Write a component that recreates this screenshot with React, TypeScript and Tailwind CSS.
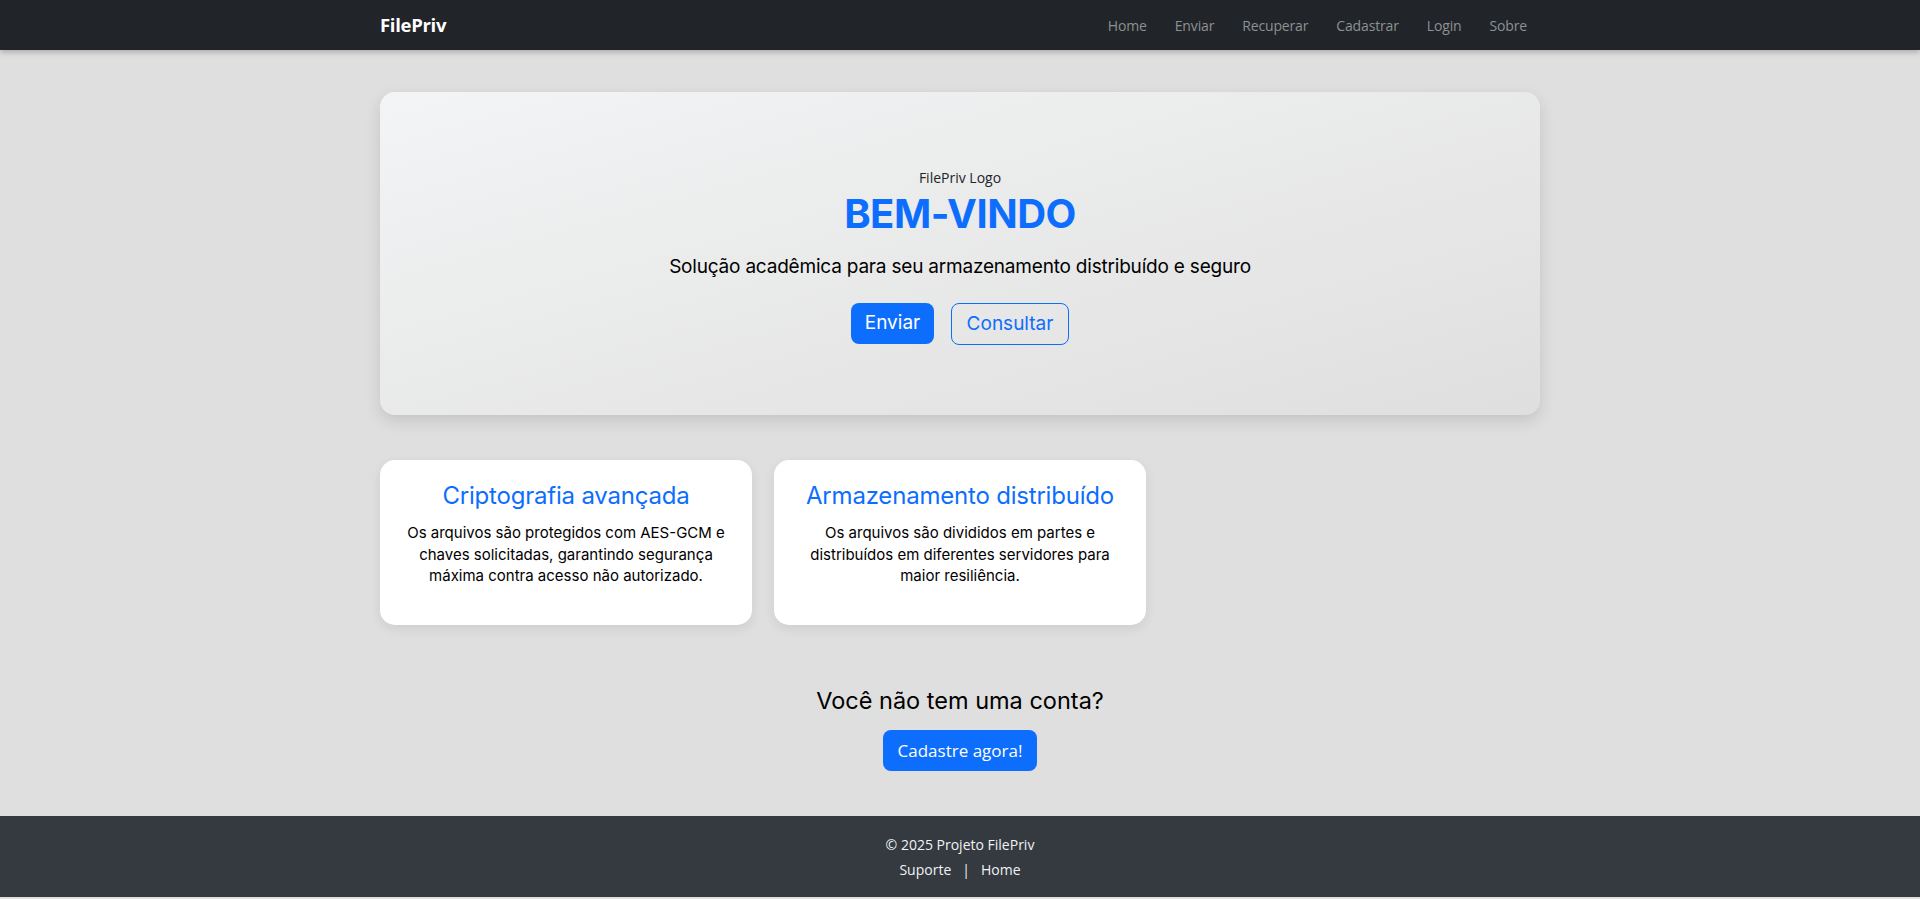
import React from "react";

const sys = { fontFamily: '"Open Sans", "Noto Sans", sans-serif' };
const pop = { fontFamily: 'Inter, "Noto Sans", sans-serif' };

export default function App() {
  const links = ["Home", "Enviar", "Recuperar", "Cadastrar", "Login", "Sobre"];
  return (
    <div className="min-h-screen flex flex-col bg-[#dfdfdf] text-[#212529]">
      <nav className="h-[50px] bg-[#212529] shadow-[0_2px_6px_rgba(0,0,0,0.25)] relative z-10">
        <div className="w-[1160px] mx-auto h-full flex items-center justify-between" style={sys}>
          <span className="text-[18.5px] font-bold text-white tracking-[-0.3px]">FilePriv</span>
          <div className="flex items-center gap-[28px] pr-[13px] text-[14px] tracking-[-0.15px] text-[#8e9092]">
            {links.map((l) => (
              <span key={l}>{l}</span>
            ))}
          </div>
        </div>
      </nav>

      <main className="w-[1160px] mx-auto pt-[42px]">
        <section className="h-[323px] rounded-[15px] bg-gradient-to-br from-[#f3f4f5] to-[#dfdfdf] shadow-[0_6px_16px_rgba(0,0,0,0.12)] flex flex-col items-center pt-[76px]">
          <span className="text-[14px] leading-[20px] text-[#212529]" style={sys}>FilePriv Logo</span>
          <h1 className="mt-[3px] text-[40px] leading-[46px] font-bold text-[#0d6efd] tracking-[-0.5px]" style={pop}>
            BEM-VINDO
          </h1>
          <p className="mt-[18px] text-[19px] leading-[24px] text-black tracking-[-0.2px]" style={pop}>
            Solução acadêmica para seu armazenamento distribuído e seguro
          </p>
          <div className="mt-[24px] flex gap-[17px]" style={pop}>
            <button className="h-[41px] w-[83px] rounded-[8px] bg-[#0d6efd] text-white text-[19px]">Enviar</button>
            <button className="h-[42px] w-[118px] rounded-[8px] border border-[#0d6efd] text-[#0d6efd] text-[19px]">
              Consultar
            </button>
          </div>
        </section>

        <section className="mt-[45px] grid grid-cols-3 gap-[22px]">
          {[
            {
              t: "Criptografia avançada",
              b: [
                "Os arquivos são protegidos com AES-GCM e",
                "chaves solicitadas, garantindo segurança",
                "máxima contra acesso não autorizado.",
              ],
            },
            {
              t: "Armazenamento distribuído",
              b: [
                "Os arquivos são divididos em partes e",
                "distribuídos em diferentes servidores para",
                "maior resiliência.",
              ],
            },
          ].map((c) => (
            <div
              key={c.t}
              className="h-[165px] rounded-[15px] bg-white shadow-[0_4px_12px_rgba(0,0,0,0.08)] flex flex-col items-center pt-[21px]"
              style={pop}
            >
              <h3 className="text-[24px] leading-[30px] text-[#0d6efd] tracking-[-0.2px]">{c.t}</h3>
              <div className="mt-[11px] text-[15px] leading-[21.5px] text-black text-center">
                {c.b.map((line) => (
                  <div key={line}>{line}</div>
                ))}
              </div>
            </div>
          ))}
        </section>

        <section className="mt-[61px] flex flex-col items-center pb-[45px]">
          <h2 className="text-[23.5px] leading-[29px] text-black" style={pop}>
            Você não tem uma conta?
          </h2>
          <button
            className="mt-[15px] h-[41px] w-[154px] rounded-[8px] bg-[#0d6efd] text-white text-[17px]"
            style={sys}
          >
            Cadastre agora!
          </button>
        </section>
      </main>

      <footer className="h-[81px] bg-[#343a40] flex flex-col items-center justify-center text-[#f1f2f3] text-[14px] leading-[25px]" style={sys}>
        <div>© 2025 Projeto FilePriv</div>
        <div className="flex gap-[11px]">
          <span>Suporte</span>
          <span>|</span>
          <span>Home</span>
        </div>
      </footer>
    </div>
  );
}
